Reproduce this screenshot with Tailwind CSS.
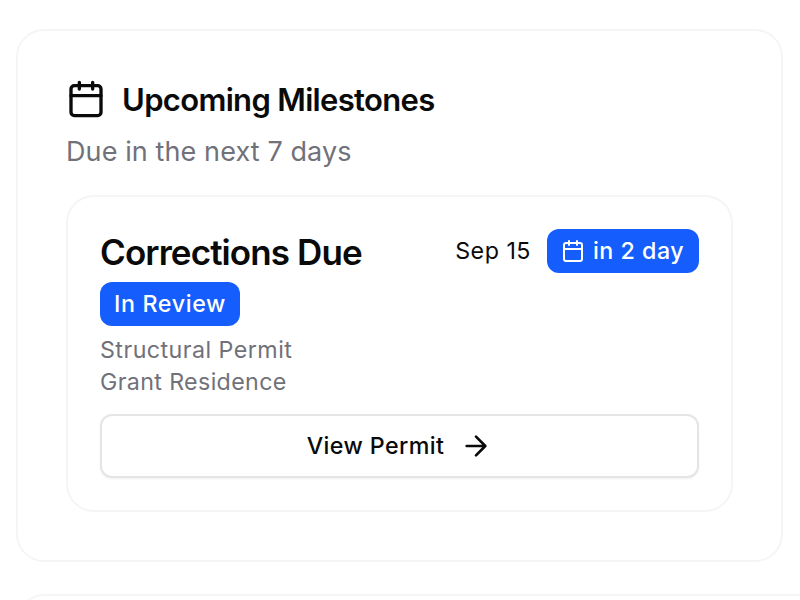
<!DOCTYPE html>
<html lang="en">
<head>
    <meta charset="UTF-8">
    <meta name="viewport" content="width=device-width, initial-scale=1.0">
    <title>Upcoming Milestones</title>
    <script src="https://cdn.jsdelivr.net/npm/@tailwindcss/browser@4"></script>
</head>
<body class="bg-white text-[#0a0a0a] font-['Inter','Liberation_Sans',sans-serif]">

    <div class="flex flex-col gap-8 h-[600px] pt-[29px] pl-4">

        <!-- Milestones card -->
        <section class="w-[767px] h-[533px] shrink-0 rounded-[28px] border-2 border-[#f5f5f5] bg-white px-12 pt-[46px]">
            <div class="flex items-center gap-4 h-11">
                <svg class="size-10 shrink-0" viewBox="0 0 24 24" fill="none" stroke="currentColor" stroke-width="2" stroke-linecap="round" stroke-linejoin="round">
                    <path d="M8 2v4M16 2v4M3 10h18" />
                    <rect x="3" y="4" width="18" height="18" rx="2" />
                </svg>
                <h2 class="pt-0.5 text-[31px] leading-10 font-semibold tracking-[-0.67px] whitespace-nowrap">Upcoming Milestones</h2>
            </div>
            <p class="mt-[11px] text-[27px] leading-10 tracking-[0.1px] text-[#71717a] whitespace-nowrap">Due in the next 7 days</p>

            <!-- Milestone item -->
            <div class="mt-[23px] w-[667px] h-[317px] rounded-[28px] border-2 border-[#f5f5f5] px-8 pt-8">
                <div class="flex items-center justify-between h-11">
                    <h3 class="pt-0.5 text-[35px] leading-11 font-semibold tracking-[-0.9px] whitespace-nowrap">Corrections Due</h3>
                    <div class="flex items-center gap-4">
                        <span class="text-[23.25px] tracking-[0.5px] whitespace-nowrap">Sep 15</span>
                        <span class="flex items-center gap-2 w-[152px] h-11 rounded-xl bg-[#155dfc] px-3.5 text-[23.25px] tracking-[0.5px] font-medium text-white whitespace-nowrap">
                            <svg class="size-6 shrink-0" viewBox="0 0 24 24" fill="none" stroke="currentColor" stroke-width="2" stroke-linecap="round" stroke-linejoin="round">
                                <path d="M8 2v4M16 2v4M3 10h18" />
                                <rect x="3" y="4" width="18" height="18" rx="2" />
                            </svg>
                            in 2 day
                        </span>
                    </div>
                </div>
                <span class="mt-[9px] flex items-center justify-center w-[140px] h-11 rounded-xl bg-[#155dfc] text-[23.25px] tracking-[0.65px] font-medium text-white whitespace-nowrap">In Review</span>
                <p class="mt-2 text-[23.25px] leading-8 tracking-[0.45px] text-[#71717a]">Structural Permit</p>
                <p class="text-[23.25px] leading-8 tracking-[0.35px] text-[#71717a]">Grant Residence</p>
                <button class="mt-4 flex items-center justify-center gap-4 w-[599px] h-16 rounded-xl border-2 border-[#e5e5e5] bg-white text-[23.25px] tracking-[0.4px] font-medium shadow-sm shadow-black/5">
                    View Permit
                    <svg class="size-8 shrink-0" viewBox="0 0 24 24" fill="none" stroke="currentColor" stroke-width="2" stroke-linecap="round" stroke-linejoin="round">
                        <path d="M5 12h14M12 5l7 7-7 7" />
                    </svg>
                </button>
            </div>
        </section>

        <!-- Next card, cut off by the viewport -->
        <div class="flex-1 min-h-0 overflow-hidden">
            <section class="h-40 rounded-l-[28px] border-2 border-r-0 border-[#f5f5f5] bg-white"></section>
        </div>

    </div>

</body>
</html>
